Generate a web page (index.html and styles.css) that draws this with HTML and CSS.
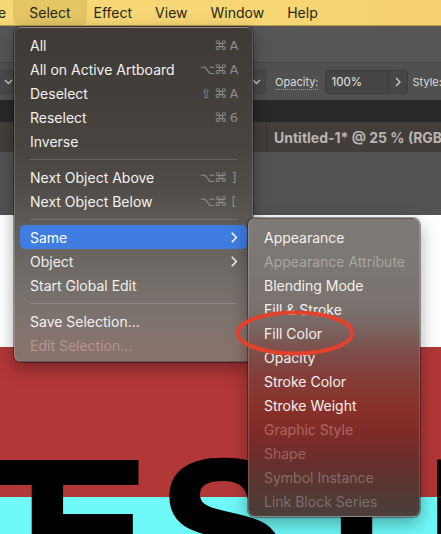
FILE: index.html
```html
<!DOCTYPE html>
<html lang="en">
<head>
<meta charset="utf-8">
<title>Select menu</title>
<link rel="stylesheet" href="styles.css">
</head>
<body>
<div class="screen">
  <nav class="menubar">
    <span class="mb-item mb-cut">Type</span>
    <span class="mb-item mb-active">Select</span>
    <span class="mb-item">Effect</span>
    <span class="mb-item">View</span>
    <span class="mb-item">Window</span>
    <span class="mb-item">Help</span>
  </nav>
  <div class="appbar"></div>
  <div class="controlbar">
    <div class="ctl-dd ctl-dd-left"><svg width="9" height="6" viewBox="0 0 9 6"><path d="M1 1l3.5 3.5L8 1" fill="none" stroke="#cfcfcf" stroke-width="1.3"/></svg></div>
    <div class="ctl-spacer"></div>
    <div class="ctl-dd ctl-dd-right"><svg width="9" height="6" viewBox="0 0 9 6"><path d="M1 1l3.5 3.5L8 1" fill="none" stroke="#cfcfcf" stroke-width="1.3"/></svg></div>
    <span class="ctl-label">Opacity:</span>
    <div class="ctl-field">100%</div>
    <div class="ctl-step"><svg width="6" height="10" viewBox="0 0 6 10"><path d="M1 1l4 4-4 4" fill="none" stroke="#cfcfcf" stroke-width="1.3"/></svg></div>
    <span class="ctl-style">Style:</span>
  </div>
  <div class="darkbar"></div>
  <div class="tabbar"><div class="tab">Untitled-1* @ 25 % (RGB/Preview)</div></div>
  <div class="pasteboard"></div>
  <div class="artboard"><div class="art-text"><span class="art-first">T</span>ESTIN</div></div>

  <div class="menu menu-main">
    <div class="row"><span class="label">All</span><span class="keys"><i>⌘</i><i>A</i></span></div>
    <div class="row"><span class="label">All on Active Artboard</span><span class="keys"><i>⌥</i><i>⌘</i><i>A</i></span></div>
    <div class="row"><span class="label">Deselect</span><span class="keys"><i>⇧</i><i>⌘</i><i>A</i></span></div>
    <div class="row"><span class="label">Reselect</span><span class="keys"><i>⌘</i><i>6</i></span></div>
    <div class="row"><span class="label">Inverse</span></div>
    <div class="sep"></div>
    <div class="row"><span class="label">Next Object Above</span><span class="keys"><i>⌥</i><i>⌘</i><i>]</i></span></div>
    <div class="row"><span class="label">Next Object Below</span><span class="keys"><i>⌥</i><i>⌘</i><i>[</i></span></div>
    <div class="sep"></div>
    <div class="row row-hl"><span class="label">Same</span><svg class="chev" width="7" height="11" viewBox="0 0 7 11"><path d="M1.2 1.2l4.2 4.3-4.2 4.3" fill="none" stroke="#ffffff" stroke-width="1.6" stroke-linecap="round" stroke-linejoin="round"/></svg></div>
    <div class="row"><span class="label">Object</span><svg class="chev" width="7" height="11" viewBox="0 0 7 11"><path d="M1.2 1.2l4.2 4.3-4.2 4.3" fill="none" stroke="#f2f0ee" stroke-width="1.6" stroke-linecap="round" stroke-linejoin="round"/></svg></div>
    <div class="row"><span class="label">Start Global Edit</span></div>
    <div class="sep"></div>
    <div class="row"><span class="label">Save Selection...</span></div>
    <div class="row row-off"><span class="label">Edit Selection...</span></div>
  </div>

  <div class="menu menu-sub">
    <div class="row"><span class="label">Appearance</span></div>
    <div class="row row-off off-gray"><span class="label">Appearance Attribute</span></div>
    <div class="row"><span class="label">Blending Mode</span></div>
    <div class="row"><span class="label">Fill &amp; Stroke</span></div>
    <div class="row"><span class="label">Fill Color</span></div>
    <div class="row"><span class="label">Opacity</span></div>
    <div class="row"><span class="label">Stroke Color</span></div>
    <div class="row"><span class="label">Stroke Weight</span></div>
    <div class="row row-off off-r1"><span class="label">Graphic Style</span></div>
    <div class="row row-off off-r2"><span class="label">Shape</span></div>
    <div class="row row-off off-r3"><span class="label">Symbol Instance</span></div>
    <div class="row row-off off-r4"><span class="label">Link Block Series</span></div>
  </div>

  <svg class="mark" width="124" height="50" viewBox="0 0 124 50"><ellipse cx="62" cy="25" rx="57" ry="20.5" fill="none" stroke="#e4412c" stroke-width="4"/></svg>
</div>
</body>
</html>
```

FILE: styles.css
```css
* { box-sizing: border-box; }
html, body { margin: 0; padding: 0; }
body { width: 441px; height: 534px; overflow: hidden; background: #535353; }

.screen {
  position: relative;
  width: 441px;
  height: 534px;
  overflow: hidden;
  display: flex;
  flex-direction: column;
  font-family: "Inter", "Noto Sans", "DejaVu Sans", sans-serif;
}

/* macOS menu bar */
.menubar {
  height: 26px;
  flex: none;
  display: flex;
  align-items: stretch;
  background: linear-gradient(to right, #f6d877, #f7d674 60%, #f5d06f);
  border-bottom: 1px solid #b99c48;
  font-size: 14px;
  color: #2a2617;
}
.mb-item {
  display: flex;
  align-items: center;
  padding: 0 11.5px;
  white-space: nowrap;
}
.mb-cut { margin-left: -38px; }
.mb-active {
  background: #e3c564;
  border-radius: 0 0 5px 5px;
  padding: 0 16px;
  margin: 0 -4.5px;
}

.appbar { height: 37px; flex: none; background: #565656; border-bottom: 1px solid #464646; }

.controlbar {
  height: 37px;
  flex: none;
  background: #505050;
  display: flex;
  align-items: center;
  font-size: 11px;
  color: #dcdcdc;
  overflow: hidden;
}
.ctl-dd {
  flex: none;
  height: 24px;
  display: flex;
  align-items: center;
  justify-content: flex-end;
  background: #4a4a4a;
  border: 1px solid #444;
  border-radius: 4px;
}
.ctl-dd-left { width: 18px; margin-left: -4px; padding-right: 0; border-left: none; }
.ctl-spacer { flex: none; width: 212px; }
.ctl-dd-right { width: 40px; padding-right: 4px; }
.ctl-label {
  flex: none;
  margin-left: 9px;
  text-decoration: underline dotted #9a9a9a;
  text-underline-offset: 3px;
}
.ctl-field {
  flex: none;
  margin-left: 6px;
  width: 64px;
  height: 24px;
  display: flex;
  align-items: center;
  padding-left: 6px;
  background: #454545;
  border: 1px solid #3c3c3c;
  border-radius: 4px 0 0 4px;
  color: #e6e6e6;
  font-size: 11.5px;
}
.ctl-step {
  flex: none;
  width: 19px;
  height: 24px;
  display: flex;
  align-items: center;
  justify-content: center;
  background: #474747;
  border: 1px solid #3c3c3c;
  border-left: none;
  border-radius: 0 4px 4px 0;
}
.ctl-style { flex: none; margin-left: 5px; white-space: nowrap; font-size: 11px; }

.darkbar { height: 22px; flex: none; background: #282828; }

.tabbar {
  height: 30px;
  flex: none;
  background: #433e3b;
  display: flex;
  padding-left: 266px;
}
.tab {
  border-left: 1px solid #3a3532;
  padding-left: 7px;
  display: flex;
  align-items: center;
  font-size: 14px;
  font-weight: 700;
  color: #bab5b1;
  white-space: nowrap;
}

.pasteboard { height: 63px; flex: none; background: #535353; }

.artboard {
  flex: 1;
  background: linear-gradient(to bottom, #ffffff 0 132px, #b23737 132px 282px, #6ff8f8 282px);
  overflow: hidden;
}
.art-text {
  padding-top: 216px;
  margin-left: -84px;
  font-family: "Liberation Sans", Arial, sans-serif;
  font-weight: 700;
  font-size: 190px;
  line-height: 1;
  color: #000;
  -webkit-text-stroke: 4px #000;
  letter-spacing: 12px;
  white-space: nowrap;
}
.art-first { letter-spacing: -11px; }

/* menus */
.menu {
  position: absolute;
  border-radius: 7px;
  border: 1px solid rgba(255,255,255,0.16);
  box-shadow: 0 0 0 1px rgba(0,0,0,0.35), 0 6px 18px rgba(0,0,0,0.35);
  font-size: 14px;
  color: #f3f1ef;
}
.menu-main {
  left: 14px;
  top: 27px;
  width: 239px;
  height: 335px;
  padding: 5px 5px 4px;
  background: linear-gradient(to bottom,
    #3e3a36 0px, #423e3a 60px, #48443f 120px, #504c48 160px,
    #615c57 200px, #6b6661 230px, #76706b 265px, #7f736e 295px, #88726d 320px, #8b706b 335px);
}
.menu-sub {
  left: 248px;
  top: 218px;
  width: 172px;
  height: 299px;
  padding: 6px 5px 4px;
  background: linear-gradient(to bottom,
    #7d7974 0px, #7b7772 50px, #7a716d 90px, #7a625e 112px, #7d4c48 135px,
    #843c37 160px, #883129 190px, #7e2b28 215px, #6b2e2b 240px, #583631 265px, #4a3f3b 299px);
}
.row {
  height: 24px;
  display: flex;
  align-items: center;
  padding: 0 10px;
  border-radius: 5px;
  white-space: nowrap;
}
.row:has(.keys) { padding-right: 7px; }
.label { flex: 1; }
.row-hl { background: #3f7de0; color: #fff; }
.row-off { color: #b39792; }
.off-gray { color: #aaa6a1; }
.off-r1 { color: #b06763; }
.off-r2 { color: #9d625e; }
.off-r3 { color: #8a6a66; }
.off-r4 { color: #7b6f6b; }
.chev { margin-right: -1px; }

.keys {
  display: flex;
  gap: 2px;
  color: #8f8b87;
  font-family: "DejaVu Sans", "Inter", sans-serif;
  font-size: 13px;
}
.keys i {
  font-style: normal;
  width: 12px;
  text-align: center;
}

.sep {
  height: 1px;
  margin: 5.5px 10px;
  background: rgba(255,255,255,0.16);
}

.mark {
  position: absolute;
  left: 233px;
  top: 308px;
}
```
